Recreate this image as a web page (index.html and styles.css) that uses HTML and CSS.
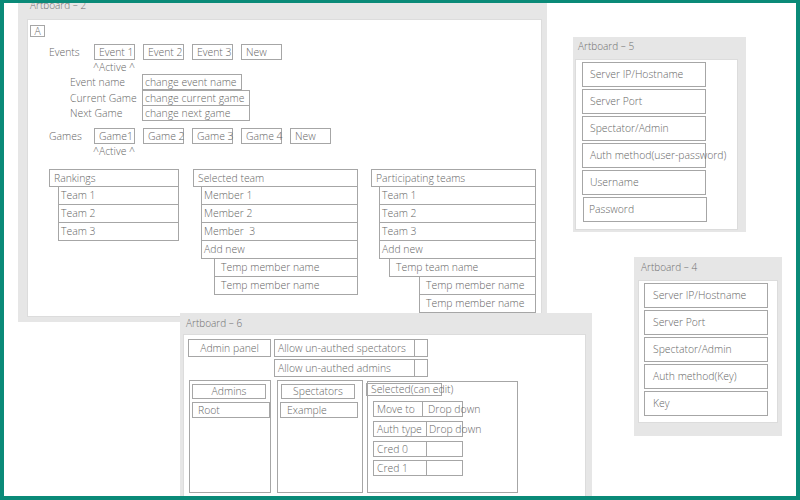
FILE: index.html
```html
<!DOCTYPE html>
<html lang="en">
<head>
<meta charset="utf-8">
<title>Artboards</title>
<link rel="stylesheet" href="styles.css">
</head>
<body>
<div class="canvas">

  <section class="artboard ab2">
    <div class="ab-title">Artboard – 2</div>
    <div class="board board2">
      <div class="box a-box">A</div>

      <div class="tab-row events-row">
        <span class="row-label">Events</span>
        <div class="box tab">Event 1</div>
        <div class="box tab">Event 2</div>
        <div class="box tab">Event 3</div>
        <div class="box tab">New</div>
      </div>
      <div class="active">^Active ^</div>

      <div class="field-row">
        <span class="field-label">Event name</span>
        <div class="box field w100">change event name</div>
      </div>
      <div class="field-row">
        <span class="field-label">Current Game</span>
        <div class="box field w108">change current game</div>
      </div>
      <div class="field-row overlap">
        <span class="field-label">Next Game</span>
        <div class="box field w108">change next game</div>
      </div>

      <div class="tab-row games-row">
        <span class="row-label">Games</span>
        <div class="box tab">Game1</div>
        <div class="box tab">Game 2</div>
        <div class="box tab">Game 3</div>
        <div class="box tab">Game 4</div>
        <div class="box tab">New</div>
      </div>
      <div class="active">^Active ^</div>

      <div class="lists">
        <div class="list list-rank">
          <div class="box list-head">Rankings</div>
          <div class="box list-row ind1">Team 1</div>
          <div class="box list-row ind1">Team 2</div>
          <div class="box list-row ind1">Team 3</div>
        </div>
        <div class="list list-sel">
          <div class="box list-head">Selected team</div>
          <div class="box list-row ind1b">Member 1</div>
          <div class="box list-row ind1b">Member 2</div>
          <div class="box list-row ind1b">Member&nbsp; 3</div>
          <div class="box list-row ind1b">Add new</div>
          <div class="box list-row ind2 sub">Temp member name</div>
          <div class="box list-row ind2 sub">Temp member name</div>
        </div>
        <div class="list list-part">
          <div class="box list-head">Participating teams</div>
          <div class="box list-row ind1b">Team 1</div>
          <div class="box list-row ind1b">Team 2</div>
          <div class="box list-row ind1b">Team 3</div>
          <div class="box list-row ind1b">Add new</div>
          <div class="box list-row ind2b sub">Temp team name</div>
          <div class="box list-row ind3 sub">Temp member name</div>
          <div class="box list-row ind3 sub">Temp member name</div>
        </div>
      </div>
    </div>
  </section>

  <section class="artboard ab5">
    <div class="ab-title">Artboard – 5</div>
    <div class="board board-login">
      <div class="box login-field">Server IP/Hostname</div>
      <div class="box login-field">Server Port</div>
      <div class="box login-field">Spectator/Admin</div>
      <div class="box login-field">Auth method(user-password)</div>
      <div class="box login-field">Username</div>
      <div class="box login-field pw">Password</div>
    </div>
  </section>

  <section class="artboard ab4">
    <div class="ab-title">Artboard – 4</div>
    <div class="board board-login board4">
      <div class="box login-field">Server IP/Hostname</div>
      <div class="box login-field">Server Port</div>
      <div class="box login-field">Spectator/Admin</div>
      <div class="box login-field">Auth method(Key)</div>
      <div class="box login-field">Key</div>
    </div>
  </section>

  <section class="artboard ab6">
    <div class="ab-title">Artboard – 6</div>
    <div class="board board6">
      <div class="admin-row">
        <div class="box admin-btn">Admin panel</div>
        <div class="box allow">Allow un-authed spectators</div>
        <div class="box check"></div>
      </div>
      <div class="admin-row row2">
        <div class="box allow">Allow un-authed admins</div>
        <div class="box check"></div>
      </div>
      <div class="panels">
        <div class="box panel p-admins">
          <div class="box panel-head">Admins</div>
          <div class="box panel-item">Root</div>
        </div>
        <div class="box panel p-spect">
          <div class="box panel-head">Spectators</div>
          <div class="box panel-item">Example</div>
        </div>
        <div class="box panel p-selected">
          <div class="box sel-head">Selected(can edit)</div>
          <div class="sel-row r-move">
            <div class="box sel-key k-move">Move to</div>
            <div class="box sel-val v-move">Drop down</div>
          </div>
          <div class="sel-row">
            <div class="box sel-key">Auth type</div>
            <div class="box sel-val">Drop down</div>
          </div>
          <div class="sel-row">
            <div class="box sel-key">Cred 0</div>
            <div class="box sel-val"></div>
          </div>
          <div class="sel-row r-last">
            <div class="box sel-key">Cred 1</div>
            <div class="box sel-val"></div>
          </div>
        </div>
      </div>
    </div>
  </section>

</div>
</body>
</html>
```

FILE: styles.css
```css
* {
  box-sizing: border-box;
}

body {
  margin: 0;
  font-family: "Open Sans", "Noto Sans", sans-serif;
  font-size: 10.4px;
  font-weight: 300;
  color: #666666;
}

.canvas {
  position: relative;
  width: 800px;
  height: 500px;
  background: #ffffff;
  border-style: solid;
  border-color: #0a8a78;
  border-width: 3px 4px 4px 4px;
  overflow: hidden;
}

/* ---------- artboards (windows on a free canvas) ---------- */
.artboard {
  position: absolute;
  display: flex;
  flex-direction: column;
  background: #e6e6e6;
}

.ab-title {
  flex: none;
  padding-left: 3px;
  line-height: 20px;
  font-size: 10px;
  color: #707070;
  white-space: nowrap;
}

.board {
  flex: none;
  background: #ffffff;
  border: 1px solid #dcdcdc;
  display: flex;
  flex-direction: column;
  align-items: flex-start;
}

.box {
  border: 1px solid #a6a6a6;
  white-space: nowrap;
  flex: none;
}

.ab2 {
  left: 14px;
  top: -9px;
  width: 529px;
  height: 328px;
  padding: 0 5px 5px 9px;
}
.ab2 .ab-title {
  height: 25px;
  padding-top: 1px;
}
.board2 { width: 515px; height: 298px; }

.ab5 {
  left: 569px;
  top: 34px;
  width: 173px;
  height: 195px;
  padding: 0 8px 2px 2px;
}
.ab5 .ab-title { height: 22px; line-height: 18px; }

.ab4 {
  left: 630px;
  top: 254px;
  width: 148px;
  height: 179px;
  padding: 0 4px 13px 4px;
}
.ab4 .ab-title { height: 23px; }

.ab6 {
  left: 176px;
  top: 310px;
  width: 412px;
  height: 200px;
  padding: 0 6px 0 3px;
}
.ab6 .ab-title { height: 21px; }

/* ---------- artboard 2 ---------- */
.a-box {
  margin: 5px 0 0 2px;
  width: 15px;
  height: 12px;
  line-height: 10px;
  text-align: center;
}

.tab-row {
  display: flex;
  align-items: center;
  margin-top: 7px;
  margin-left: 21px;
  height: 16px;
}

.row-label {
  width: 45px;
  line-height: 16px;
}

.tab {
  width: 41px;
  height: 16px;
  line-height: 14px;
  padding-left: 4px;
  margin-right: 8px;
}

.active {
  margin-left: 65px;
  height: 14px;
  line-height: 14px;
}

.field-row {
  display: flex;
  align-items: center;
  margin-left: 42px;
  height: 16px;
}
.field-row.overlap { margin-top: -1px; }

.field-label {
  width: 72px;
  line-height: 16px;
}

.field {
  height: 16px;
  line-height: 14px;
  padding-left: 2px;
}
.w100 { width: 100px; }
.w108 { width: 108px; }

.lists {
  display: flex;
  align-items: flex-start;
  margin-top: 11px;
  margin-left: 21px;
}

.list {
  display: flex;
  flex-direction: column;
  align-items: flex-end;
}
.list-rank { width: 130px; }
.list-sel { width: 165px; margin-left: 14px; }
.list-part { width: 165px; margin-left: 13px; }

.list-head {
  align-self: stretch;
  height: 18px;
  line-height: 16px;
  padding-left: 4px;
}

.list-row {
  height: 19px;
  margin-top: -1px;
  line-height: 17px;
  padding-left: 2px;
}
.list-row.sub { padding-left: 6px; }

.list-rank .ind1 { width: 121px; }
.ind1b { width: 157px; }
.list-sel .ind2 { width: 144px; }
.ind2b { width: 147px; }
.ind3 { width: 117px; }

/* ---------- login artboards ---------- */
.board-login {
  width: 163px;
  height: 171px;
  padding-top: 2px;
  gap: 2px;
}

.login-field {
  width: 124px;
  height: 25px;
  line-height: 23px;
  margin-left: 6px;
  padding-left: 7px;
}
.login-field.pw {
  margin-left: 7px;
  padding-left: 5px;
}

.board4 {
  width: 140px;
  height: 143px;
}
.board4 .login-field {
  margin-left: 5px;
  padding-left: 8px;
}

/* ---------- artboard 6 ---------- */
.board6 {
  width: 403px;
  height: 180px;
}

.admin-row {
  display: flex;
  margin-top: 4px;
  margin-left: 4px;
}
.admin-row.row2 {
  margin-top: 2px;
  margin-left: 90px;
}

.admin-btn {
  width: 83px;
  height: 18px;
  line-height: 16px;
  text-align: center;
  margin-right: 3px;
}

.allow {
  width: 141px;
  height: 18px;
  line-height: 16px;
  padding-left: 3px;
}

.check {
  width: 14px;
  height: 18px;
  margin-left: -1px;
}

.panels {
  display: flex;
  align-items: flex-start;
  margin-top: 3px;
  margin-left: 5px;
}

.panel {
  display: flex;
  flex-direction: column;
  align-items: flex-start;
  height: 113px;
}

.p-admins { width: 82px; }
.p-spect { width: 86px; margin-left: 6px; }
.p-selected {
  width: 151px;
  height: 112px;
  margin-left: 4px;
  margin-top: 1px;
}

.panel-head {
  width: 74px;
  height: 15px;
  line-height: 13px;
  text-align: center;
  margin: 3px 0 0 2px;
}
.p-spect .panel-head { margin-left: 3px; }

.panel-item {
  width: 78px;
  height: 16px;
  line-height: 14px;
  margin: 3px 0 0 2px;
  padding-left: 5px;
}
.p-spect .panel-item {
  margin-left: 2px;
  padding-left: 6px;
}

.sel-head {
  width: 76px;
  height: 13px;
  line-height: 11px;
  margin: 1px 0 0 -2px;
  padding-left: 4px;
}

.sel-row {
  display: flex;
  margin-top: 4px;
  margin-left: 5px;
}
.sel-row.r-move { margin-top: 5px; }
.sel-row.r-last { margin-top: 3px; }

.sel-key {
  width: 54px;
  height: 16px;
  line-height: 14px;
  padding-left: 3px;
}
.sel-key.k-move { width: 50px; }

.sel-val {
  width: 37px;
  height: 16px;
  line-height: 14px;
  margin-left: -1px;
  padding-left: 2px;
}
.sel-val.v-move {
  width: 41px;
  padding-left: 5px;
}
```
